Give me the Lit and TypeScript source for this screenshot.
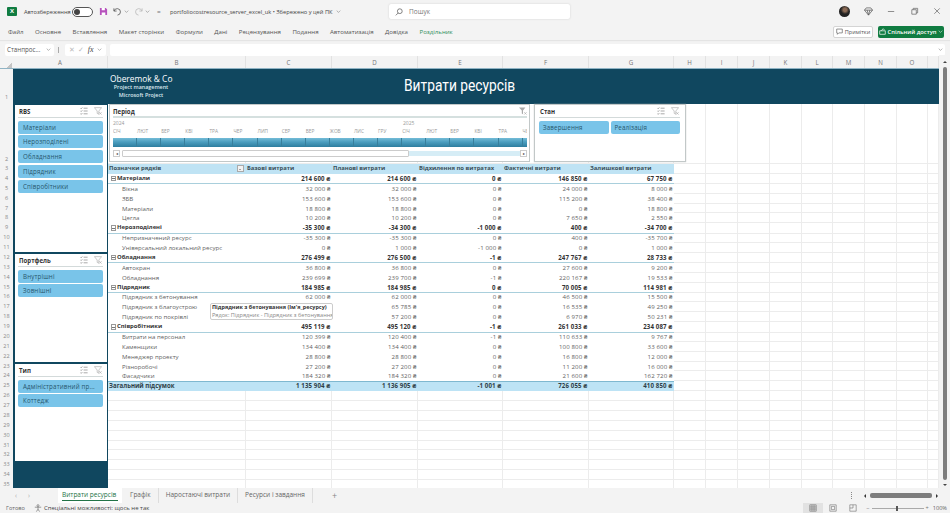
// app.ts
import { LitElement, html, css, svg } from 'lit';
import { customElement } from 'lit/decorators.js';

const COLS = ['A', 'B', 'C', 'D', 'E', 'F', 'G', 'H', 'I', 'J', 'K', 'L', 'M', 'N', 'O', ''];

type PivotRow = { label: string; bold?: boolean; values: string[] };

const PIVOT: PivotRow[] = [
  { label: 'Матеріали', bold: true, values: ['214 600', '214 600', '0', '146 850', '67 750'] },
  { label: 'Вікна', values: ['32 000', '32 000', '0', '24 000', '8 000'] },
  { label: 'ЗБВ', values: ['153 600', '153 600', '0', '115 200', '38 400'] },
  { label: 'Матеріали', values: ['18 800', '18 800', '0', '0', '18 800'] },
  { label: 'Цегла', values: ['10 200', '10 200', '0', '7 650', '2 550'] },
  { label: 'Нерозподілені', bold: true, values: ['-35 300', '-34 300', '-1 000', '400', '-34 700'] },
  { label: 'Непризначений ресурс', values: ['-35 300', '-35 300', '0', '400', '-35 700'] },
  { label: 'Універсальний локальний ресурс', values: ['0', '1 000', '-1 000', '0', '1 000'] },
  { label: 'Обладнання', bold: true, values: ['276 499', '276 500', '-1', '247 767', '28 733'] },
  { label: 'Автокран', values: ['36 800', '36 800', '0', '27 600', '9 200'] },
  { label: 'Обладнання', values: ['239 699', '239 700', '-1', '220 167', '19 533'] },
  { label: 'Підрядник', bold: true, values: ['184 985', '184 985', '0', '70 005', '114 981'] },
  { label: 'Підрядник з бетонування', values: ['62 000', '62 000', '0', '46 500', '15 500'] },
  { label: 'Підрядник з благоустрою', values: ['65 785', '65 785', '0', '16 535', '49 250'] },
  { label: 'Підрядник по покрівлі', values: ['57 200', '57 200', '0', '6 970', '50 231'] },
  { label: 'Співробітники', bold: true, values: ['495 119', '495 120', '-1', '261 033', '234 087'] },
  { label: 'Витрати на персонал', values: ['120 399', '120 400', '-1', '110 633', '9 767'] },
  { label: 'Каменщики', values: ['134 400', '134 400', '0', '100 800', '33 600'] },
  { label: 'Менеджер проекту', values: ['28 800', '28 800', '0', '16 800', '12 000'] },
  { label: 'Різноробочі', values: ['27 200', '27 200', '0', '11 200', '16 000'] },
  { label: 'Фасадчики', values: ['184 320', '184 320', '0', '21 600', '162 720'] },
];

const HEADERS = ['Базові витрати', 'Планові витрати', 'Відхилення по витратах', 'Фактичні витрати', 'Залишкові витрати'];
const TOTAL = ['1 135 904', '1 136 905', '-1 001', '726 055', '410 850'];
const MONTHS = ['СІЧ', 'ЛЮТ', 'БЕР', 'КВІ', 'ТРА', 'ЧЕР', 'ЛИП', 'СЕР', 'ВЕР', 'ЖОВ', 'ЛИС', 'ГРУ', 'СІЧ', 'ЛЮТ', 'БЕР', 'КВІ', 'ТРА', 'ЧЕ'];

const multiIcon = svg`<svg class="ico" viewBox="0 0 10 10" fill="none" stroke="#777" stroke-width=".8">
  <path d="M4.5 1.5h5M4.5 5h5M4.5 8.5h5M.5 1.2l1 1 1.4-1.6M.5 4.7l1 1 1.4-1.6M.5 8.2l1 1 1.4-1.6"/></svg>`;
const clearIcon = svg`<svg class="ico" viewBox="0 0 10 10" fill="none" stroke="#aaa" stroke-width=".8">
  <path d="M.5 .8h9L6 5v4L4 8V5zM6.5 6.5l3 3M9.5 6.5l-3 3"/></svg>`;
const chevron = svg`<svg class="chev" viewBox="0 0 8 5" fill="none" stroke="currentColor" stroke-width=".9"><path d="M1 1l3 3 3-3"/></svg>`;

@customElement('app-root')
export class AppRoot extends LitElement {
  static override styles = css`
    :host {
      display: flex;
      flex-direction: column;
      width: 950px;
      height: 513px;
      overflow: hidden;
      background: #f3f3f3;
      color: #555;
      font-family: 'Open Sans', 'Liberation Sans', sans-serif;
      font-size: 6.5px;
      --grid: 13px 95px 138px 86px 86px 85px 86px 85px 32px 32px 32px 32px 31px 32px 32px 31px 11px;
      --navy: #10475f;
    }
    svg {
      display: block;
      flex: none;
    }
    .chev {
      width: 5px;
      height: 3px;
      color: #777;
    }

    /* title bar */
    .titlebar {
      display: flex;
      align-items: center;
      height: 23px;
      flex: none;
      padding-left: 7px;
    }
    .logo {
      width: 10px;
      height: 9px;
      background: #107c41;
      border-radius: 1px;
      color: #fff;
      font-size: 6px;
      font-weight: 700;
      line-height: 9px;
      text-align: center;
    }
    .autosave {
      margin-left: 7px;
      width: 48px;
      white-space: nowrap;
      font-size: 5.7px;
      color: #444;
    }
    .toggle {
      width: 21px;
      height: 10px;
      box-sizing: border-box;
      border: 1px solid #555;
      border-radius: 6px;
      background: #fff;
      display: flex;
      align-items: center;
      padding-left: 1px;
    }
    .toggle span {
      width: 6px;
      height: 6px;
      border-radius: 50%;
      background: #444;
    }
    .qa {
      display: flex;
      align-items: center;
      gap: 2px;
      margin-left: 6px;
      width: 71px;
      flex: none;
    }
    .qa .m {
      margin-left: 3px;
    }
    .qa .eq {
      margin-left: 5px;
      color: #777;
    }
    .qa .dim {
      color: #c4c4c4;
    }
    .file {
      width: 219px;
      flex: none;
      white-space: nowrap;
      font-size: 5.7px;
      color: #444;
      display: flex;
      align-items: center;
      gap: 3px;
    }
    .search {
      width: 181px;
      height: 15px;
      background: #fff;
      border-radius: 2px;
      box-shadow: 0 0 2px #ccc;
      display: flex;
      align-items: center;
      gap: 6px;
      padding-left: 6px;
      box-sizing: border-box;
      font-size: 6.5px;
      color: #777;
    }
    .win {
      margin-left: auto;
      padding-right: 8px;
      display: flex;
      align-items: center;
      gap: 14px;
    }
    .avatar {
      width: 11px;
      height: 11px;
      border-radius: 50%;
      background: radial-gradient(circle at 55% 35%, #8a6a55 0 18%, #222 45%);
    }

    /* ribbon tabs */
    .menu {
      display: flex;
      align-items: center;
      gap: 11.5px;
      height: 17px;
      flex: none;
      padding-left: 8px;
      padding-right: 6px;
      font-size: 6.1px;
      color: #555;
      white-space: nowrap;
      box-shadow: 0 1px 1px #e4e4e4;
    }
    .menu .green {
      color: #2f8f5b;
    }
    .notes {
      margin-left: auto;
      height: 12px;
      width: 40px;
      box-sizing: border-box;
      background: #fff;
      border: 1px solid #d4d4d4;
      border-radius: 2px;
      display: flex;
      align-items: center;
      justify-content: center;
      gap: 2px;
      font-size: 5.6px;
    }
    .share {
      margin-left: -6.5px;
      height: 12px;
      width: 66px;
      background: #107c41;
      color: #fff;
      border-radius: 2px;
      display: flex;
      align-items: center;
      justify-content: center;
      gap: 2px;
      font-size: 5.8px;
      font-weight: 600;
    }
    .share .chev {
      color: #fff;
    }

    /* formula bar */
    .formula {
      display: flex;
      align-items: center;
      height: 13px;
      flex: none;
      margin-top: 3px;
      padding: 0 5px;
      gap: 4px;
    }
    .namebox {
      width: 49px;
      height: 12px;
      box-sizing: border-box;
      background: #fff;
      border-radius: 2px;
      display: flex;
      align-items: center;
      justify-content: space-between;
      padding: 0 3px 0 2px;
      font-size: 6.2px;
      color: #555;
      white-space: nowrap;
    }
    .sep {
      width: 1px;
      height: 6px;
      background: #aaa;
      margin-right: 2px;
    }
    .fxbox {
      width: 41px;
      height: 12px;
      background: #fff;
      border-radius: 2px;
      display: flex;
      align-items: center;
      justify-content: space-around;
      padding: 0 2px;
      box-sizing: border-box;
      color: #bbb;
      font-size: 7px;
    }
    .fx {
      font-family: 'Liberation Serif', serif;
      font-style: italic;
      color: #444;
      font-size: 8px;
    }
    .input {
      flex: 1;
      height: 12px;
      background: #fff;
      border-radius: 2px;
      display: flex;
      align-items: center;
      justify-content: flex-end;
      padding-right: 2px;
    }

    /* sheet */
    .colhead {
      display: grid;
      grid-template-columns: var(--grid);
      height: 12px;
      flex: none;
      box-sizing: border-box;
      width: 939px;
    }
    .colhead div {
      text-align: center;
      line-height: 13px;
      color: #777;
      font-size: 6.2px;
      border-right: 1px solid #e2e2e2;
    }
    .colhead .corner {
      border: none;
      background: linear-gradient(135deg, transparent 60%, #c4c4c4 60%) no-repeat right 1px bottom 1px / 7px 7px;
    }
    .body {
      display: flex;
      flex: 1;
      min-height: 0;
    }
    .sheet {
      position: relative;
      width: 939px;
      flex: none;
      background: #fff;
      overflow: hidden;
      border-top: 1px solid #8fb3c4;
      box-sizing: border-box;
    }
    .vscroll {
      flex: 1;
      margin-top: -13px;
      display: flex;
      flex-direction: column;
      align-items: center;
      padding: 6px 0 2px;
      background: #f3f3f3;
      z-index: 1;
    }
    .vthumb {
      width: 4px;
      flex: 1;
      margin: 4px 0 4px;
      background: #7d7d7d;
      border-radius: 2px;
    }
    .row {
      display: grid;
      grid-template-columns: var(--grid);
      height: 9.875px;
      box-sizing: border-box;
    }
    .row.band {
      height: 34.5px;
    }
    .row.tall {
      height: 60.5px;
    }
    .num {
      background: #f3f3f3;
      color: #888;
      font-size: 5.5px;
      text-align: center;
      line-height: 9.875px;
      overflow: hidden;
    }
    .band .num {
      line-height: 56px;
    }
    .tall .num {
      line-height: 111px;
    }
    .nav {
      background: var(--navy);
    }
    .c {
      border-right: 1px solid #ececec;
      border-bottom: 1px solid #ececec;
      box-sizing: border-box;
      min-width: 0;
    }
    .brandcell {
      background: var(--navy);
      padding-left: 2px;
    }
    .brand {
      text-align: center;
      width: 62px;
      padding-top: 4px;
      line-height: 7.6px;
      font-size: 5.4px;
      font-weight: 600;
      white-space: nowrap;
      color: #dce8ee;
    }
    .brand b {
      display: block;
      font-size: 8.4px;
      font-weight: 400;
      line-height: 11px;
      color: #fff;
    }
    .title {
      grid-column: span 5;
      background: var(--navy);
      color: #fff;
      font-family: Roboto, sans-serif;
      font-size: 16px;
      text-align: center;
      line-height: 34px;
    }
    .title span {
      display: inline-block;
      transform: scaleX(0.86);
    }
    .fill {
      grid-column: span 9;
      background: var(--navy);
    }

    /* pivot */
    .p {
      font-family: 'Open Sans', sans-serif;
      font-size: 6.1px;
      line-height: 9.6px;
      color: #5f5f5f;
      white-space: nowrap;
      background: #fff;
      box-sizing: border-box;
      min-width: 0;
    }
    .p.v {
      text-align: right;
      padding-right: 1.5px;
      letter-spacing: 0.12px;
    }
    .p.lab {
      padding-left: 14px;
    }
    .row.bold {
      position: relative;
      z-index: 1;
    }
    .row.bold .p {
      font-weight: 700;
      color: #333;
      border-bottom: 1px solid #a9cfdc;
    }
    .row.bold .p.lab {
      padding-left: 2.5px;
      display: flex;
      align-items: center;
      gap: 1px;
      font-size: 5.9px;
    }
    .minus {
      width: 3.5px;
      height: 3.5px;
      border: 0.5px solid #999;
      flex: none;
      position: relative;
    }
    .minus::after {
      content: '';
      position: absolute;
      left: 0.5px;
      right: 0.5px;
      top: 1.5px;
      height: 0.6px;
      background: #777;
    }
    .row.head .p {
      background: #bfe3f4;
      font-weight: 700;
      color: #3a4f58;
      padding-left: 1px;
      font-size: 5.9px;
    }
    .row.head .lab {
      display: flex;
      align-items: center;
      justify-content: space-between;
      padding-right: 2px;
    }
    .drop {
      width: 7px;
      height: 7px;
      background: #f2f2f2;
      border: 0.5px solid #aaa;
      box-sizing: border-box;
      position: relative;
    }
    .drop::after {
      content: '';
      position: absolute;
      left: 1.2px;
      top: 2.2px;
      border: 1.8px solid transparent;
      border-top-color: #555;
    }
    .row.total .p {
      background: #bde3f5;
      font-weight: 700;
      color: #2e3e46;
      border-top: 1px solid #7fb8d0;
      padding-left: 1px;
      line-height: 8.6px;
    }

    /* slicers float over the sheet */
    .slicer {
      position: absolute;
      z-index: 3;
      background: #fff;
      border: 1px solid var(--navy);
      box-sizing: border-box;
      padding: 1px 4px 0 3px;
      display: flex;
      flex-direction: column;
    }
    .s-rbs {
      left: 14px;
      top: 35px;
      width: 94px;
      height: 149px;
    }
    .s-port {
      left: 14px;
      top: 184px;
      width: 94px;
      height: 110px;
    }
    .s-type {
      left: 14px;
      top: 294px;
      width: 94px;
      height: 99px;
    }
    .s-state {
      left: 534px;
      top: 35px;
      width: 152px;
      height: 58px;
      border: 1px solid #c2c8c8;
      box-shadow: 0 0 1px #bbb;
      padding-left: 4px;
      padding-right: 5px;
    }
    .s-head {
      display: flex;
      align-items: center;
      height: 10.5px;
      padding: 0 1px;
      border-bottom: 1px solid #d3dada;
      font-size: 6.1px;
      font-weight: 700;
      color: #333;
      gap: 6px;
      flex: none;
    }
    .s-head span {
      margin-right: auto;
    }
    .ico {
      width: 8px;
      height: 8px;
    }
    .btns {
      display: flex;
      flex-direction: column;
      gap: 1.8px;
      margin-top: 3px;
    }
    .btns.two {
      flex-direction: row;
      gap: 2px;
    }
    .btn {
      height: 13px;
      background: #79c4e9;
      border-radius: 2px;
      color: #27566c;
      font-size: 6.2px;
      letter-spacing: 0.15px;
      line-height: 13px;
      padding-left: 5px;
      white-space: nowrap;
      flex: none;
    }
    .btns.two .btn {
      flex: 1 1 0;
      min-width: 0;
      padding-left: 4px;
    }

    /* timeline */
    .timeline {
      position: absolute;
      z-index: 3;
      left: 109px;
      top: 35px;
      width: 421px;
      height: 58px;
      background: #fff;
      border: 1px solid #c2c8c8;
      box-sizing: border-box;
      padding: 1px 2px 0 3px;
      overflow: hidden;
    }
    .t-head {
      display: flex;
      justify-content: space-between;
      align-items: center;
      height: 10px;
      font-weight: 700;
      font-size: 6.1px;
      color: #333;
      border-bottom: 2px solid #d5e0df;
    }
    .years {
      display: flex;
      height: 7.5px;
      align-items: flex-end;
      color: #999;
      font-size: 5px;
    }
    .years span:first-child {
      width: 290px;
    }
    .months,
    .bar {
      display: grid;
      grid-template-columns: repeat(18, 24.1px);
      overflow: hidden;
    }
    .months {
      height: 11px;
      align-items: center;
      font-size: 4.8px;
      color: #999;
      white-space: nowrap;
    }
    .bar {
      height: 9px;
      margin-top: 1px;
    }
    .bar i {
      background: linear-gradient(#74bcd8, #4a9dbe 45%, #2d7d9f);
      border-right: 1px solid #377f9c;
    }
    .t-scroll {
      display: flex;
      align-items: center;
      height: 7px;
      margin-top: 3px;
    }
    .t-arrow {
      width: 7px;
      height: 7px;
      background: #fff;
      border: 0.5px solid #ccc;
      box-sizing: border-box;
      color: #444;
      font-size: 4px;
      line-height: 6px;
      text-align: center;
      flex: none;
    }
    .t-thumb {
      width: 287px;
      height: 7px;
      margin-left: 2px;
      background: #fff;
      border: 0.5px solid #ccc;
      box-sizing: border-box;
      border-radius: 1px;
      flex: none;
    }
    .t-track {
      flex: 1;
      height: 5px;
      background: #d6edf6;
    }

    /* tooltip */
    .tip {
      position: absolute;
      left: 210px;
      top: 234px;
      z-index: 2;
      width: 123px;
      height: 17px;
      box-sizing: border-box;
      background: #fff;
      border: 1px solid #ccc;
      border-radius: 2px;
      padding: 0 0 0 1px;
      font-size: 5.6px;
      line-height: 7.8px;
      white-space: nowrap;
      overflow: hidden;
      color: #888;
    }
    .tip b {
      display: block;
      color: #333;
      font-size: 5.5px;
    }

    /* sheet tabs */
    .tabs {
      display: flex;
      align-items: center;
      height: 15px;
      flex: none;
      font-size: 6.5px;
      color: #666;
      white-space: nowrap;
    }
    .tabnav {
      display: flex;
      gap: 11px;
      width: 58px;
      padding-left: 15px;
      box-sizing: border-box;
      color: #aaa;
    }
    .tab {
      height: 15px;
      line-height: 13px;
      padding: 0 7px;
      border-right: 1px solid #ddd;
      box-sizing: border-box;
    }
    .tab.on {
      background: #fff;
      color: #217346;
      position: relative;
      width: 64px;
      padding: 0 4px;
      border: none;
      margin-right: 1px;
    }
    .tab.on::after {
      content: '';
      position: absolute;
      left: 4px;
      right: 4px;
      bottom: 2px;
      height: 1px;
      background: #217346;
    }
    .plus {
      margin-left: 19px;
      font-size: 9px;
      color: #888;
    }
    .hs {
      margin-left: auto;
      display: flex;
      align-items: center;
      gap: 4px;
      margin-right: 12px;
    }
    .hthumb {
      width: 62px;
      height: 5px;
      background: #7d7d7d;
      border-radius: 2px;
    }
    .dots {
      width: 1px;
      height: 7px;
      margin-right: 7px;
      border-left: 1px dotted #888;
    }
    .tri {
      width: 0;
      height: 0;
      border: 2.5px solid transparent;
      flex: none;
    }
    .tri.l {
      border-left: 0;
      border-right-color: #333;
    }
    .tri.r {
      border-right: 0;
      border-left-color: #333;
    }
    .tri.u {
      border-top: 0;
      border-bottom-color: #444;
    }
    .tri.d {
      border-bottom: 0;
      border-top-color: #444;
    }

    /* status bar */
    .status {
      display: flex;
      align-items: center;
      height: 10px;
      flex: none;
      padding-left: 6px;
      padding-right: 3px;
      font-size: 5.6px;
      color: #444;
      white-space: nowrap;
    }
    .status .ready {
      width: 28px;
      color: #666;
    }
    .acc {
      display: flex;
      align-items: center;
      gap: 2px;
      font-size: 6px;
    }
    .views {
      margin-left: auto;
      display: flex;
      align-items: center;
    }
    .view {
      width: 20px;
      height: 10px;
      display: flex;
      align-items: center;
      justify-content: center;
    }
    .view.on {
      background: #e2e2e2;
    }
    .zoom {
      display: flex;
      align-items: center;
      margin-left: 3px;
      gap: 2px;
      color: #777;
    }
    .slider {
      width: 52px;
      height: 1px;
      background: #aaa;
      position: relative;
    }
    .slider::after {
      content: '';
      position: absolute;
      left: 24px;
      top: -2px;
      width: 2px;
      height: 5px;
      background: #555;
    }
    .pct {
      margin-left: 4px;
      color: #666;
    }
  `;

  private slicer(cls: string, title: string, items: string[], two = false) {
    return html`<div class="slicer ${cls}">
      <div class="s-head"><span>${title}</span>${multiIcon}${clearIcon}</div>
      <div class="btns ${two ? 'two' : ''}">${items.map((i) => html`<div class="btn">${i}</div>`)}</div>
    </div>`;
  }

  private blanks(n: number) {
    return Array.from({ length: n }, () => html`<div class="c"></div>`);
  }

  private pivotRow(n: number, r: PivotRow) {
    return html`<div class="row ${r.bold ? 'bold' : ''}">
      <div class="num">${n}</div>
      <div class="nav"></div>
      <div class="p lab">${r.bold ? html`<i class="minus"></i>` : ''}${r.label}</div>
      ${r.values.map((v) => html`<div class="p v">${v} ₴</div>`)}
      ${this.blanks(9)}
    </div>`;
  }

  private emptyRow(n: number) {
    return html`<div class="row">
      <div class="num">${n}</div>
      <div class="nav"></div>
      ${this.blanks(15)}
    </div>`;
  }

  override render() {
    const empties = Array.from({ length: 10 }, (_, i) => i + 26);
    return html`
      <div class="titlebar">
        <div class="logo">X</div>
        <div class="autosave">Автозбереження</div>
        <div class="toggle"><span></span></div>
        <div class="qa">
          <svg width="9" height="9" viewBox="0 0 10 10">
            <path d="M1 1h6.5L9 2.5V9H1z" fill="#b652bc" />
            <path d="M3 1h3.5v2.5H3zM3 6h4v3H3z" fill="#fff" />
          </svg>
          <svg class="m" width="9" height="9" viewBox="0 0 10 10" fill="none" stroke="#555" stroke-width=".9">
            <path d="M1 1.5v3h3M1.2 4.5A3.6 3.6 0 1 1 5 9" />
          </svg>
          ${chevron}
          <svg class="m" width="9" height="9" viewBox="0 0 10 10" fill="none" stroke="#bbb" stroke-width=".9">
            <path d="M9 1.5v3H6M8.8 4.5A3.6 3.6 0 1 0 5 9" />
          </svg>
          <span class="dim">${chevron}</span>
          <span class="eq">=</span>
        </div>
        <div class="file">portfoliocostresource_server_excel_uk • Збережено у цей ПК ${chevron}</div>
        <div class="search">
          <svg width="8" height="8" viewBox="0 0 10 10" fill="none" stroke="#666">
            <circle cx="6" cy="4" r="3" /><path d="M4 6.2L1 9.2" />
          </svg>
          Пошук
        </div>
        <div class="win">
          <div class="avatar"></div>
          <svg width="9" height="9" viewBox="0 0 10 10" fill="none" stroke="#555" stroke-width=".8">
            <path d="M2.5 1h5L9.5 3.5 5 9 .5 3.5zM.5 3.5h9M3.5 3.5L5 9l1.5-5.5" />
          </svg>
          <svg width="9" height="9" viewBox="0 0 10 10" stroke="#666" stroke-width=".8"><path d="M1 5h7" /></svg>
          <svg width="9" height="9" viewBox="0 0 10 10" fill="none" stroke="#666" stroke-width=".8">
            <path d="M2 3h5v5H2zM3.5 3V1.5h5v5H7" />
          </svg>
          <svg width="9" height="9" viewBox="0 0 10 10" stroke="#666" stroke-width=".8"><path d="M1.5 1.5l6 6M7.5 1.5l-6 6" /></svg>
        </div>
      </div>

      <div class="menu">
        <span>Файл</span><span>Основне</span><span>Вставлення</span><span>Макет сторінки</span>
        <span>Формули</span><span>Дані</span><span>Рецензування</span><span>Подання</span>
        <span>Автоматизація</span><span>Довідка</span><span class="green">Роздільник</span>
        <div class="notes">
          <svg width="7" height="7" viewBox="0 0 10 10" fill="none" stroke="#666"><path d="M1 1.5h8v5.5H4L2 9V7H1z" /></svg>
          Примітки
        </div>
        <div class="share">
          <svg width="7" height="7" viewBox="0 0 10 10" fill="none" stroke="#fff"><path d="M1 4h8v5H1zM3 4l3-3 2 2" /></svg>
          Спільний доступ ${chevron}
        </div>
      </div>

      <div class="formula">
        <div class="namebox">Станпрос... ${chevron}</div>
        <div class="sep"></div>
        <div class="fxbox"><span>✕</span><span>✓</span><span class="fx">fx</span>${chevron}</div>
        <div class="input">${chevron}</div>
      </div>

      <div class="colhead">
        <div class="corner"></div>
        ${COLS.map((c) => html`<div>${c}</div>`)}
      </div>

      <div class="body">
        <div class="sheet">
          <div class="row band">
            <div class="num">1</div>
            <div class="nav"></div>
            <div class="brandcell">
              <div class="brand"><b>Oberemok &amp; Co</b>Project management<br />Microsoft Project</div>
            </div>
            <div class="title"><span>Витрати ресурсів</span></div>
            <div class="fill"></div>
          </div>
          <div class="row tall">
            <div class="num">2</div>
            <div class="nav"></div>
            ${this.blanks(15)}
          </div>
          <div class="row head">
            <div class="num">3</div>
            <div class="nav"></div>
            <div class="p lab">Позначки рядків<i class="drop"></i></div>
            ${HEADERS.map((h) => html`<div class="p">${h}</div>`)}
            ${this.blanks(9)}
          </div>
          ${PIVOT.map((r, i) => this.pivotRow(i + 4, r))}
          <div class="row total">
            <div class="num">25</div>
            <div class="nav"></div>
            <div class="p">Загальний підсумок</div>
            ${TOTAL.map((v) => html`<div class="p v">${v} ₴</div>`)}
            ${this.blanks(9)}
          </div>
          ${empties.map((n) => this.emptyRow(n))}

          ${this.slicer('s-rbs', 'RBS', ['Матеріали', 'Нерозподілені', 'Обладнання', 'Підрядник', 'Співробітники'])}
          ${this.slicer('s-port', 'Портфель', ['Внутрішні', 'Зовнішні'])}
          ${this.slicer('s-type', 'Тип', ['Адміністративний пр...', 'Коттедж'])}
          ${this.slicer('s-state', 'Стан', ['Завершення', 'Реалізація'], true)}

          <div class="timeline">
            <div class="t-head">
              <span>Період</span>
              <svg width="8" height="8" viewBox="0 0 10 10" fill="#aaa"><path d="M0 .5h8L5 4.5V9L3.5 8V4.5z" /><path d="M6.5 6.5l3 3M9.5 6.5l-3 3" stroke="#aaa" stroke-width=".8" /></svg>
            </div>
            <div class="years"><span>2024</span><span>2025</span></div>
            <div class="months">${MONTHS.map((m) => html`<span>${m}</span>`)}</div>
            <div class="bar">${MONTHS.map(() => html`<i></i>`)}</div>
            <div class="t-scroll">
              <div class="t-arrow">◂</div>
              <div class="t-thumb"></div>
              <div class="t-track"></div>
              <div class="t-arrow">▸</div>
            </div>
          </div>

          <div class="tip">
            <b>Підрядник з бетонування (Ім'я_ресурсу)</b>
            Рядок: Підрядник - Підрядник з бетонування
          </div>
        </div>
        <div class="vscroll">
          <div class="tri u"></div>
          <div class="vthumb"></div>
          <div class="tri d"></div>
        </div>
      </div>

      <div class="tabs">
        <div class="tabnav"><span>‹</span><span>›</span></div>
        <div class="tab on">Витрати ресурсів</div>
        <div class="tab">Графік</div>
        <div class="tab">Наростаючі витрати</div>
        <div class="tab">Ресурси і завдання</div>
        <div class="plus">+</div>
        <div class="hs">
          <div class="dots"></div>
          <div class="tri l"></div>
          <div class="hthumb"></div>
          <div class="tri r"></div>
        </div>
      </div>

      <div class="status">
        <div class="ready">Готово</div>
        <div class="acc">
          <svg width="8" height="8" viewBox="0 0 10 10" fill="none" stroke="#555" stroke-width=".7">
            <circle cx="5" cy="2" r="1.2" /><path d="M1 4h8M5 4v2.5M3 9.5l2-3 2 3" />
          </svg>
          Спеціальні можливості: щось не так
        </div>
        <div class="views">
          <div class="view on">
            <svg width="8" height="8" viewBox="0 0 10 10" fill="none" stroke="#666" stroke-width=".7"><path d="M1 1h8v8H1zM1 3.7h8M1 6.3h8M3.7 1v8M6.3 1v8" /></svg>
          </div>
          <div class="view">
            <svg width="8" height="8" viewBox="0 0 10 10" fill="none" stroke="#666" stroke-width=".7"><path d="M1 1h8v8H1zM3 3h4v4H3z" /></svg>
          </div>
          <div class="view">
            <svg width="8" height="8" viewBox="0 0 10 10" fill="none" stroke="#666" stroke-width=".7"><path d="M1 1h8v8H1zM5 1v4H1" /></svg>
          </div>
          <div class="zoom"><span>−</span><div class="slider"></div><span>+</span></div>
          <div class="pct">100%</div>
        </div>
      </div>
    `;
  }
}
